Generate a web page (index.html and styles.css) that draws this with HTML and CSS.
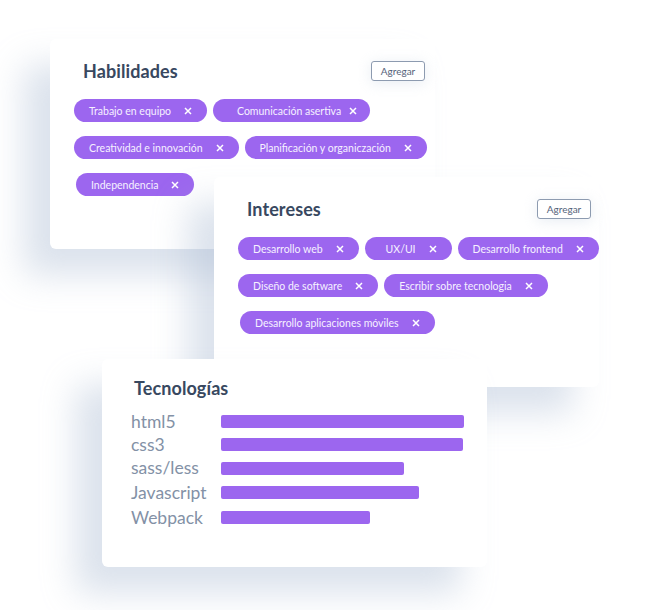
FILE: index.html
```html
<!DOCTYPE html>
<html lang="es">
<head>
<meta charset="utf-8">
<title>Perfil</title>
<link rel="stylesheet" href="styles.css">
</head>
<body>
<div class="canvas">
  <section class="card card-skills">
    <header class="card-head">
      <h2 class="card-title">Habilidades</h2>
      <button class="btn-add">Agregar</button>
    </header>
    <div class="chips">
      <div class="chip-row">
        <span class="chip">Trabajo en equipo<svg class="x" viewBox="0 0 8 8"><path d="M1 1L7 7M7 1L1 7"/></svg></span>
        <span class="chip chip-wide">Comunicación asertiva<svg class="x" viewBox="0 0 8 8"><path d="M1 1L7 7M7 1L1 7"/></svg></span>
      </div>
      <div class="chip-row">
        <span class="chip">Creatividad e innovación<svg class="x" viewBox="0 0 8 8"><path d="M1 1L7 7M7 1L1 7"/></svg></span>
        <span class="chip">Planificación y organiczación<svg class="x" viewBox="0 0 8 8"><path d="M1 1L7 7M7 1L1 7"/></svg></span>
      </div>
      <div class="chip-row shift">
        <span class="chip">Independencia<svg class="x" viewBox="0 0 8 8"><path d="M1 1L7 7M7 1L1 7"/></svg></span>
      </div>
    </div>
  </section>

  <section class="card card-interests">
    <header class="card-head">
      <h2 class="card-title">Intereses</h2>
      <button class="btn-add">Agregar</button>
    </header>
    <div class="chips">
      <div class="chip-row">
        <span class="chip">Desarrollo web<svg class="x" viewBox="0 0 8 8"><path d="M1 1L7 7M7 1L1 7"/></svg></span>
        <span class="chip chip-center">UX/UI<svg class="x" viewBox="0 0 8 8"><path d="M1 1L7 7M7 1L1 7"/></svg></span>
        <span class="chip">Desarrollo frontend<svg class="x" viewBox="0 0 8 8"><path d="M1 1L7 7M7 1L1 7"/></svg></span>
      </div>
      <div class="chip-row">
        <span class="chip">Diseño de software<svg class="x" viewBox="0 0 8 8"><path d="M1 1L7 7M7 1L1 7"/></svg></span>
        <span class="chip">Escribir sobre tecnologia<svg class="x" viewBox="0 0 8 8"><path d="M1 1L7 7M7 1L1 7"/></svg></span>
      </div>
      <div class="chip-row shift">
        <span class="chip">Desarrollo aplicaciones móviles<svg class="x" viewBox="0 0 8 8"><path d="M1 1L7 7M7 1L1 7"/></svg></span>
      </div>
    </div>
  </section>

  <section class="card card-tech">
    <h2 class="card-title tech-title">Tecnologías</h2>
    <ul class="bars">
      <li class="bar-row"><span class="bar-label">html5</span><span class="bar" style="width:243px"></span></li>
      <li class="bar-row"><span class="bar-label">css3</span><span class="bar" style="width:242px"></span></li>
      <li class="bar-row"><span class="bar-label">sass/less</span><span class="bar" style="width:183px"></span></li>
      <li class="bar-row"><span class="bar-label">Javascript</span><span class="bar" style="width:198px"></span></li>
      <li class="bar-row"><span class="bar-label">Webpack</span><span class="bar" style="width:149px"></span></li>
    </ul>
  </section>
</div>
</body>
</html>
```

FILE: styles.css
```css
* { box-sizing: border-box; }
html, body { margin: 0; padding: 0; background: #ffffff; }
body {
  font-family: Lato, "Noto Sans", "Liberation Sans", sans-serif;
  width: 650px;
  height: 610px;
  overflow: hidden;
}
.canvas {
  position: relative;
  width: 650px;
  height: 610px;
}
.card {
  position: absolute;
  width: 385px;
  height: 210px;
  background: #ffffff;
  border-radius: 6px;
  box-shadow: -26px 26px 34px rgba(170, 185, 210, 0.42);
}
.card-skills { left: 50px; top: 39px; z-index: 1; padding: 22px 10px 0 24px; }
.card-interests { left: 214px; top: 177px; z-index: 2; padding: 22px 8px 0 24px; }
.card-tech { left: 102px; top: 359px; height: 208px; z-index: 3; padding: 17px 0 0 29px; }

.card-head {
  display: flex;
  justify-content: space-between;
  align-items: center;
  height: 20px;
  margin-bottom: 18px;
}
.card-title {
  margin: 0 0 0 9px;
  font-size: 18px;
  font-weight: 700;
  color: #384860;
  letter-spacing: 0.1px;
}
.btn-add {
  width: 54px;
  height: 20px;
  padding: 0;
  border: 1px solid #8d9bb0;
  border-radius: 3px;
  background: #ffffff;
  font-family: inherit;
  font-size: 10px;
  color: #55637a;
  box-shadow: 0 2px 14px rgba(205, 214, 228, 0.45);
}
.chips {
  display: flex;
  flex-direction: column;
  gap: 14px;
}
.chip-row {
  display: flex;
  gap: 6px;
}
.chip-row.shift { padding-left: 2px; }
.chip {
  display: inline-flex;
  align-items: center;
  gap: 13px;
  height: 23px;
  padding: 0 15px 0 15px;
  border-radius: 12px;
  background: #9c66ef;
  color: #f6f1ff;
  font-size: 10.5px;
  white-space: nowrap;
}
.chip-wide { padding-left: 24px; padding-right: 13px; gap: 8px; }
.chip-center { padding-left: 21px; }
.x {
  width: 8px;
  height: 8px;
  flex: none;
}
.x path {
  stroke: #ffffff;
  stroke-width: 1.5;
  fill: none;
}
.tech-title {
  margin: 0 0 0 3px;
  height: 24px;
  line-height: 24px;
  margin-bottom: 10px;
}
.bars {
  list-style: none;
  margin: 0;
  padding: 0;
}
.bar-row {
  display: flex;
  align-items: center;
  height: 24px;
}
.bar-row:first-child { height: 23px; }
.bar-row:nth-child(2) { height: 23px; }
.bar-row:nth-child(4),
.bar-row:nth-child(5) { height: 25px; }
.bar-label {
  width: 90px;
  flex: none;
  font-size: 17.5px;
  font-weight: 400;
  color: #8391a6;
  line-height: 24px;
}
.bar {
  display: block;
  height: 13px;
  border-radius: 2px;
  background: #9c66ef;
}
```
